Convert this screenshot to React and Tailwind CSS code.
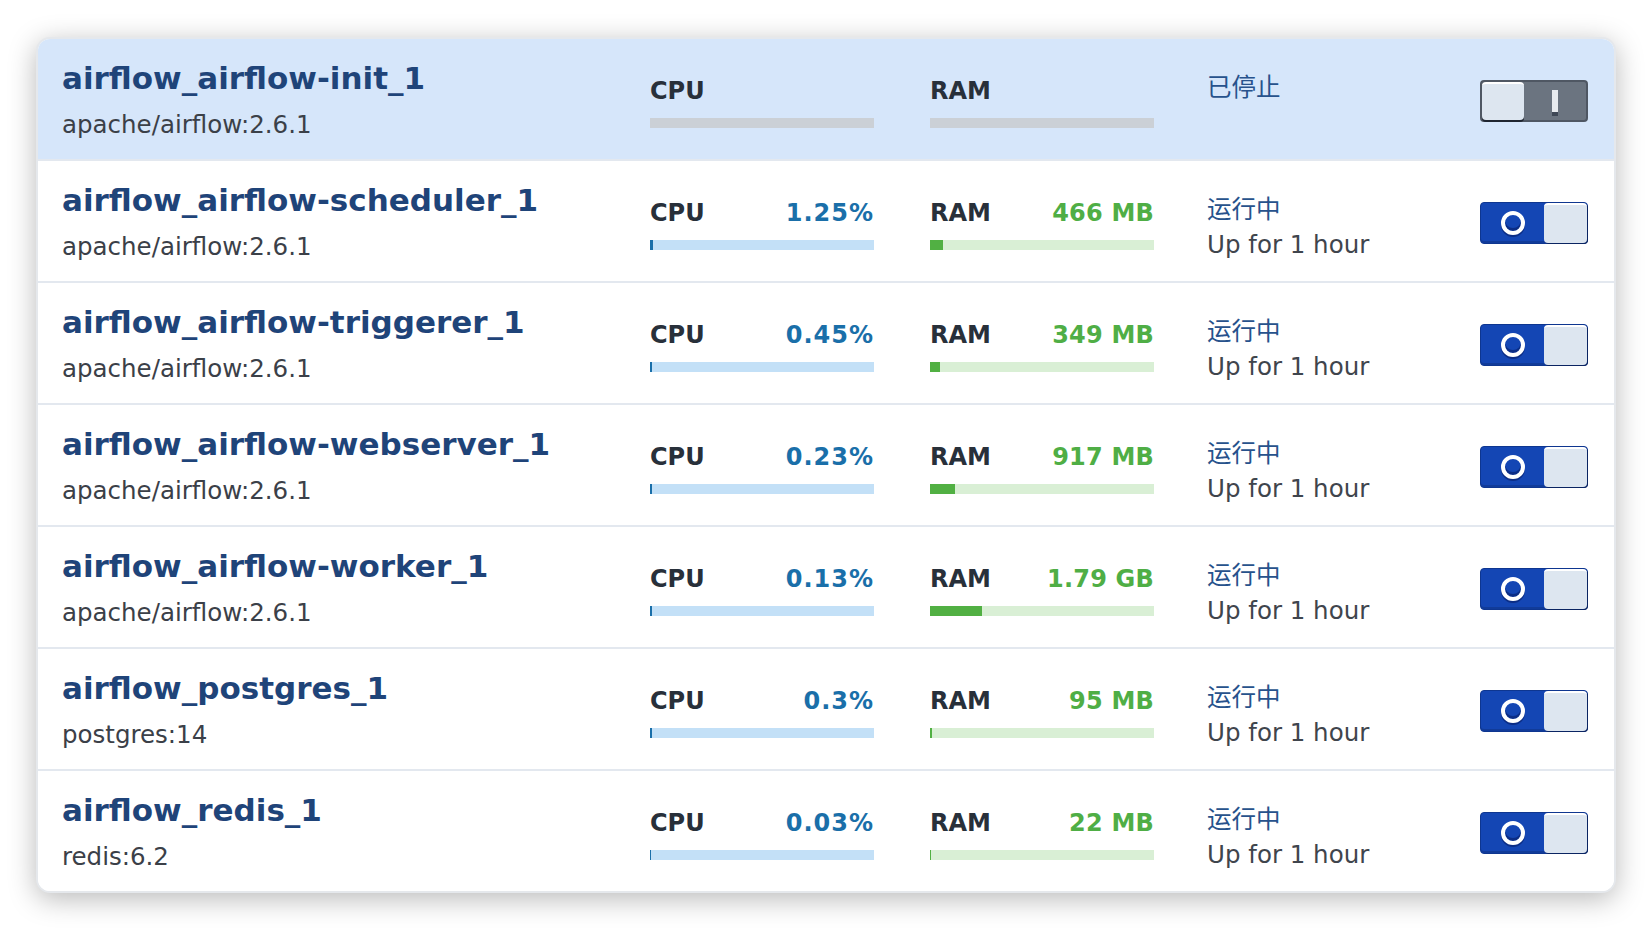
const containers = [
  { name: 'airflow_airflow-init_1', image: 'apache/airflow:2.6.1', running: false },
  { name: 'airflow_airflow-scheduler_1', image: 'apache/airflow:2.6.1', running: true, cpu: '1.25%', cpuFill: 3, ram: '466 MB', ramFill: 13 },
  { name: 'airflow_airflow-triggerer_1', image: 'apache/airflow:2.6.1', running: true, cpu: '0.45%', cpuFill: 2, ram: '349 MB', ramFill: 10 },
  { name: 'airflow_airflow-webserver_1', image: 'apache/airflow:2.6.1', running: true, cpu: '0.23%', cpuFill: 2, ram: '917 MB', ramFill: 25 },
  { name: 'airflow_airflow-worker_1', image: 'apache/airflow:2.6.1', running: true, cpu: '0.13%', cpuFill: 2, ram: '1.79 GB', ramFill: 52 },
  { name: 'airflow_postgres_1', image: 'postgres:14', running: true, cpu: '0.3%', cpuFill: 2, ram: '95 MB', ramFill: 2 },
  { name: 'airflow_redis_1', image: 'redis:6.2', running: true, cpu: '0.03%', cpuFill: 1, ram: '22 MB', ramFill: 1 },
];

function Meter({ label, value, fill, running, kind }) {
  const valueColor = kind === 'cpu' ? 'text-[#1a6fa9] tracking-[1px]' : 'text-[#4fae45] tracking-[0.2px]';
  const trackColor = !running ? 'bg-[#cbd0d6]' : kind === 'cpu' ? 'bg-[#c3e0f7]' : 'bg-[#d9efd5]';
  const fillColor = kind === 'cpu' ? 'bg-[#1a6fa9]' : 'bg-[#51b043]';
  return (
    <div className="w-[224px] pt-[38px]">
      <div className="flex justify-between items-baseline text-[24px] leading-[28px] font-bold">
        <span className="text-[#28303a]">{label}</span>
        {running && <span className={valueColor}>{value}</span>}
      </div>
      <div className={`mt-[13px] h-[10px] flex ${trackColor}`}>
        {running && <div className={`h-full ${fillColor}`} style={{ width: fill }}></div>}
      </div>
    </div>
  );
}

function Toggle({ on }) {
  if (on) {
    return (
      <div className="w-[108px] h-[42px] rounded-[4px] bg-[#1446b4] border border-[#0e3690] flex shadow-[inset_0_-2px_0_rgba(0,0,0,0.15)]">
        <div className="flex-1 flex items-center justify-center">
          <div className="w-[24px] h-[24px] rounded-full border-[4px] border-white bg-[#1446b4] shadow-[inset_0_-3px_0_#0b2d86,0_2px_0_#0b2d86]"></div>
        </div>
        <div className="w-[43px] h-full rounded-[4px] bg-[#dde6f0] border-t-2 border-t-white shadow-[1px_1px_0_#0a2462]"></div>
      </div>
    );
  }
  return (
    <div className="w-[108px] h-[42px] rounded-[4px] bg-[#6b7480] border-2 border-[#4f5763] flex">
      <div className="w-[42px] h-full rounded-[4px] bg-[#dde6f0] border-t-2 border-t-white shadow-[0_2px_0_#1f2530]"></div>
      <div className="flex-1 flex flex-col items-center pt-[8px]">
        <div className="w-[6px] h-[22px] bg-[#e8ebef]"></div>
        <div className="w-[6px] h-[4px] bg-[#3f4856]"></div>
      </div>
    </div>
  );
}

function Row({ c, last }) {
  return (
    <div className={`flex ${last ? 'h-[120px]' : 'h-[122px] border-b-2 border-[#e3e8ef]'} ${c.running ? 'bg-white' : 'bg-[#d6e6fa]'}`}>
      <div className="w-[612px] pl-6 pt-[21px]">
        <div className="text-[31px] leading-[36px] font-bold text-[#1f4479] whitespace-nowrap">{c.name}</div>
        <div className="mt-[13px] text-[24.5px] leading-[32px] text-[#3b4048]">{c.image}</div>
      </div>
      <Meter label="CPU" value={c.cpu} fill={c.cpuFill} running={c.running} kind="cpu" />
      <div className="ml-[56px]">
        <Meter label="RAM" value={c.ram} fill={c.ramFill} running={c.running} kind="ram" />
      </div>
      <div className="ml-[53px] flex-1 pt-[34px] text-[24.5px] leading-[30px]">
        <div className="text-[#27528c]">{c.running ? '运行中' : '已停止'}</div>
        {c.running && <div className="mt-[5px] text-[#3f454d]">Up for 1 hour</div>}
      </div>
      <div className="self-center mr-[26px] mt-[3px]">
        <Toggle on={c.running} />
      </div>
    </div>
  );
}

export default function App() {
  return (
    <div className="min-h-screen bg-white px-[36px] pt-[37px] font-['DejaVu_Sans','Noto_Sans_CJK_SC',sans-serif]">
      <div className="rounded-[14px] border-2 border-[#e5e8ec] bg-white overflow-hidden shadow-[0_6px_28px_rgba(0,0,0,0.28)]">
        {containers.map((c, i) => (
          <Row key={c.name} c={c} last={i === containers.length - 1} />
        ))}
      </div>
    </div>
  );
}
